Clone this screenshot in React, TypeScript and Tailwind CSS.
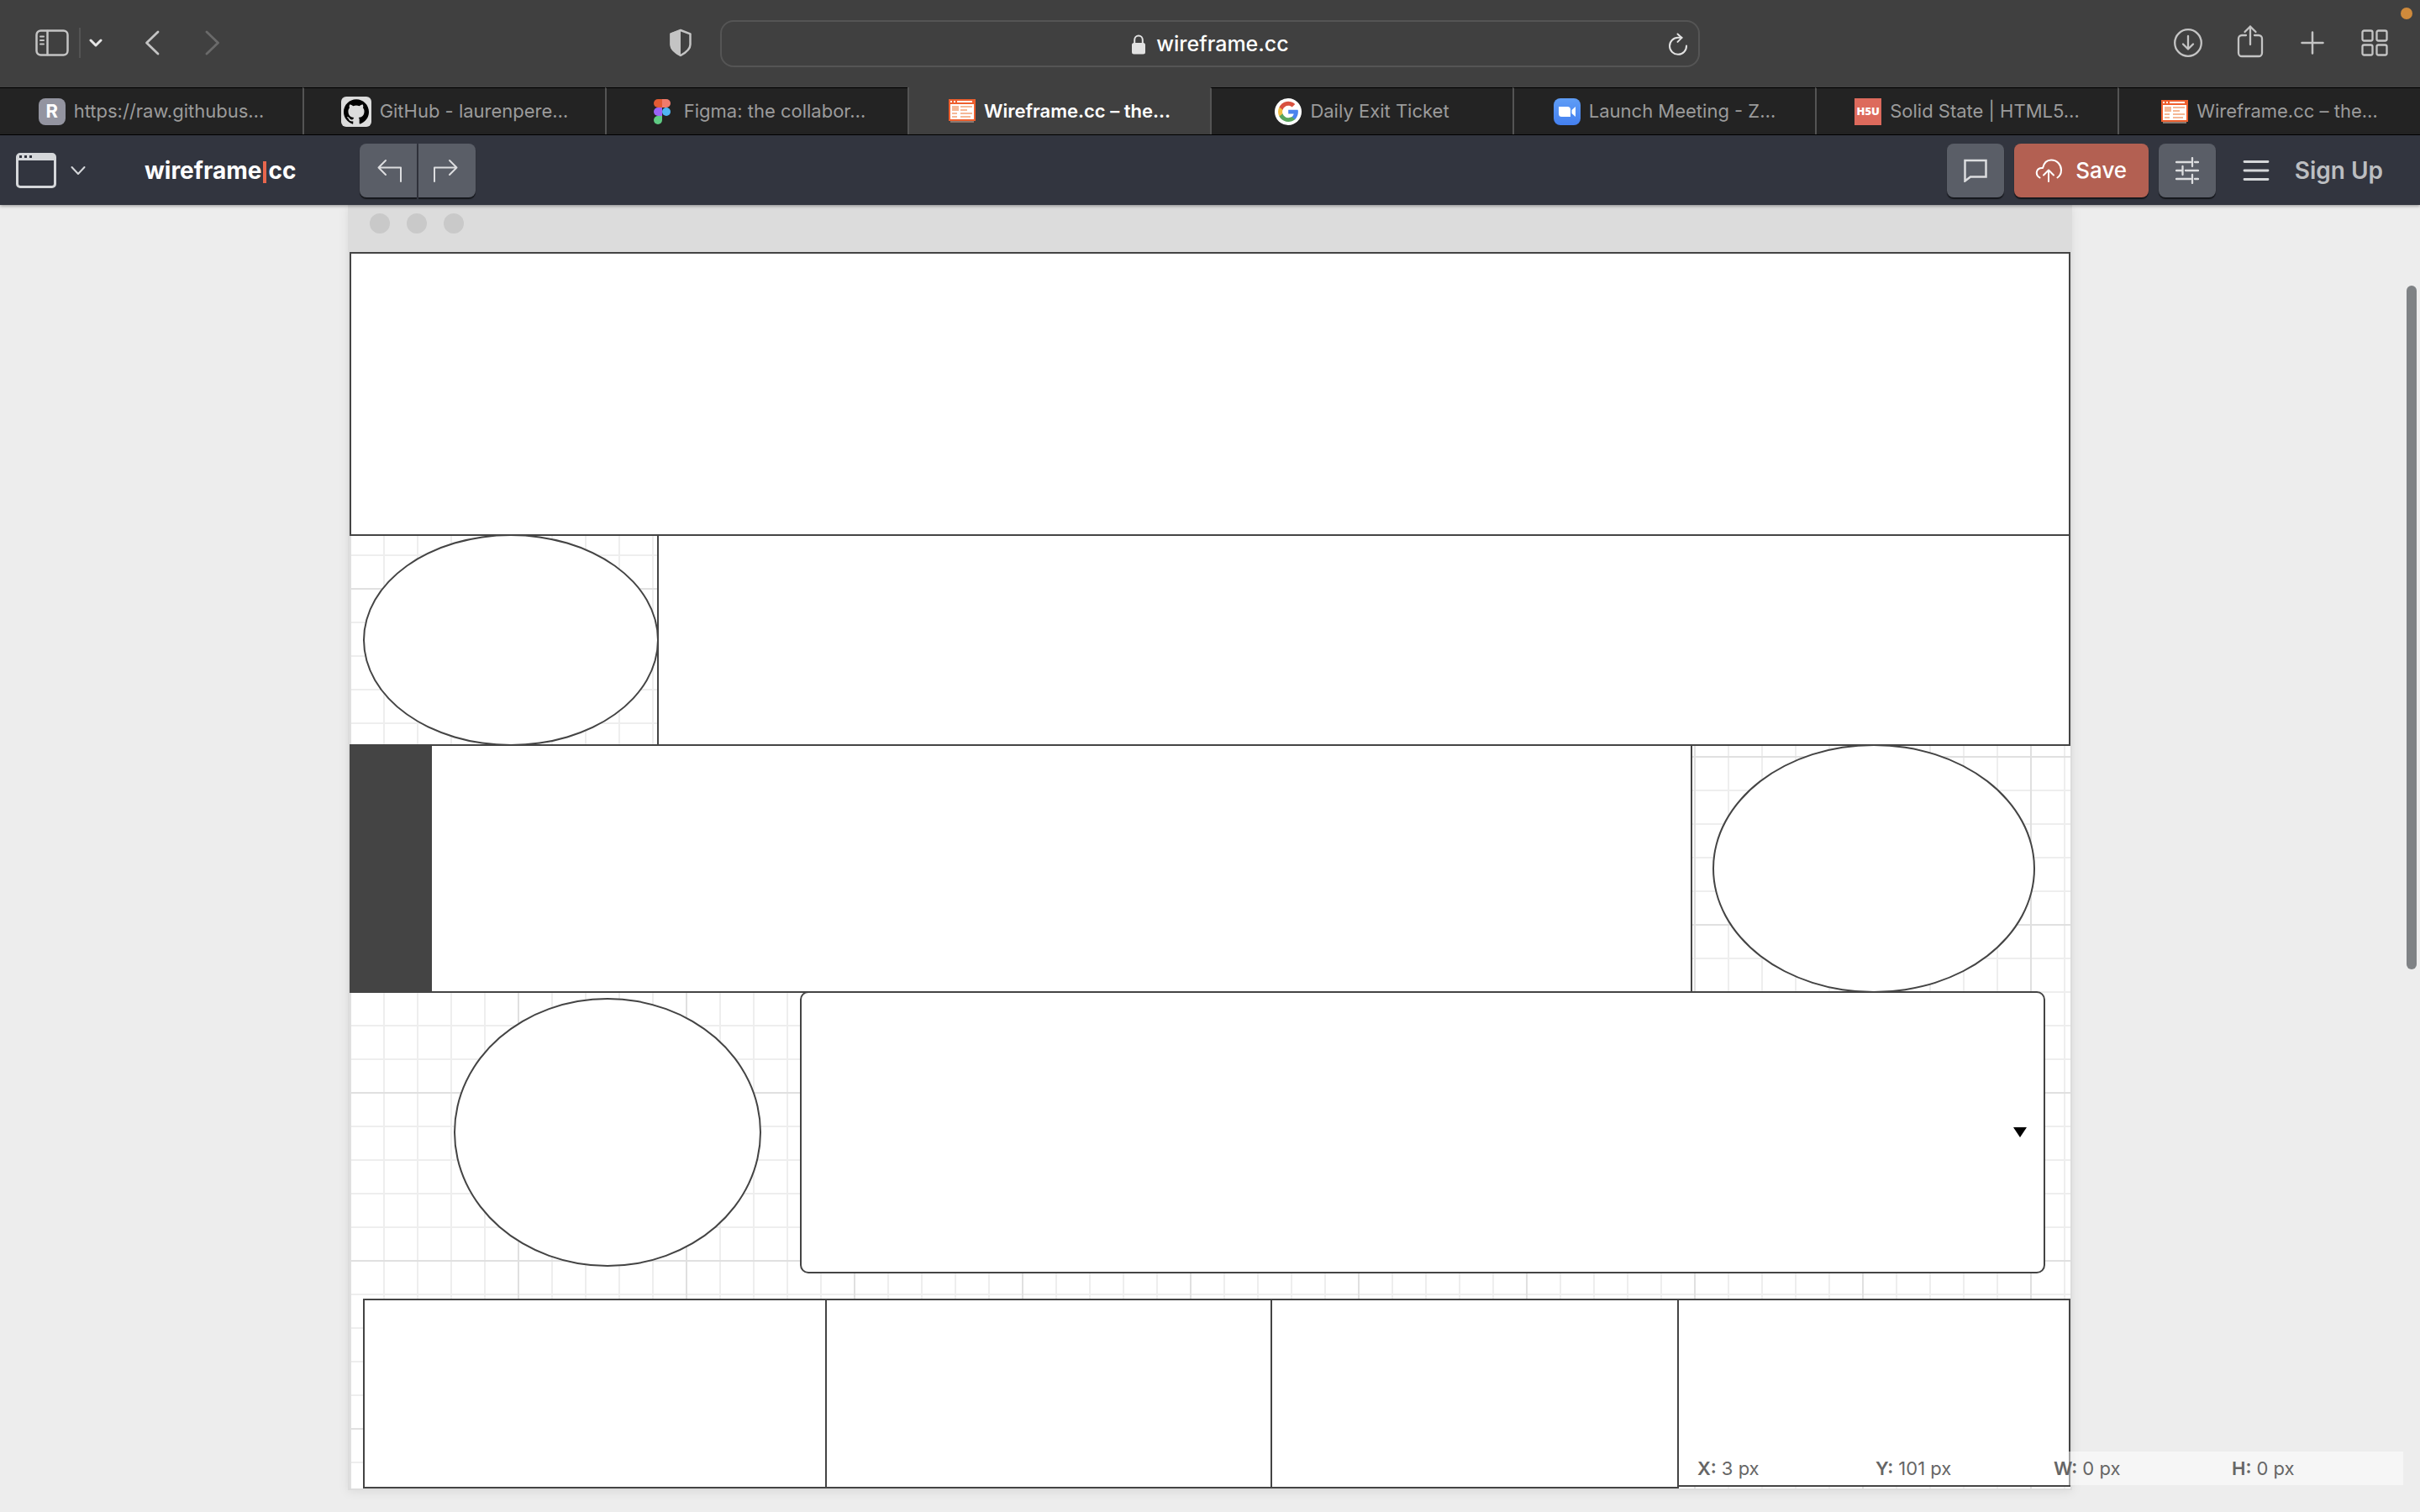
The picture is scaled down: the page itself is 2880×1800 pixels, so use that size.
import type { ReactNode } from "react";
import { SiGithub } from "react-icons/si";

const stroke = {
  fill: "none",
  stroke: "currentColor",
  strokeLinecap: "round",
  strokeLinejoin: "round",
} as const;

function SidebarIcon() {
  return (
    <svg width="40" height="32" viewBox="0 0 40 32" {...stroke} strokeWidth="2.5">
      <rect x="1.5" y="1.5" width="37" height="29" rx="5" />
      <path d="M14.5 2v28" />
      <path d="M6 8.5h4M6 13h4M6 17.5h4" strokeWidth="2" />
    </svg>
  );
}

function ShieldIcon() {
  return (
    <svg width="30" height="34" viewBox="0 0 30 34">
      <path
        d="M15 2 26.5 6.3v12.7c0 5.500-5 9.500-11.500 13-6.500-3.500-11.500-7.500-11.500-13V6.300Z"
        fill="none"
        stroke="currentColor"
        strokeWidth="2.500"
        strokeLinejoin="round"
      />
      <path d="M15 1 2.500 5.800v13.200c0 6 5.500 10.500 12.500 14Z" fill="currentColor" />
    </svg>
  );
}

function LockIcon() {
  return (
    <svg width="18" height="24" viewBox="0 0 18 24">
      <rect x="1" y="10" width="16" height="13.500" rx="2.500" fill="currentColor" />
      <path d="M4.200 11V6.500a4.800 5 0 0 1 9.600 0V11" fill="none" stroke="currentColor" strokeWidth="2" />
    </svg>
  );
}

function ReloadIcon() {
  return (
    <svg width="24" height="28" viewBox="0 0 24 28" {...stroke} strokeWidth="2">
      <path d="M22 15.500A10 10 0 1 1 12 5.800h4.500" />
      <path d="m11.500 1.500 5 4.400-5 5" />
    </svg>
  );
}

function DownloadIcon() {
  return (
    <svg width="36" height="36" viewBox="0 0 36 36" {...stroke} strokeWidth="2.300">
      <circle cx="18" cy="18" r="15.800" />
      <path d="M18 10v15M12 19.500l6 6 6-6" />
    </svg>
  );
}

function ShareIcon() {
  return (
    <svg width="32" height="40" viewBox="0 0 32 40" {...stroke} strokeWidth="2.300">
      <path d="M11 13H6a4 4 0 0 0-4 4v17a4 4 0 0 0 4 4h20a4 4 0 0 0 4-4V17a4 4 0 0 0-4-4h-5" />
      <path d="M16 24V2.500M9.500 9 16 2.500 22.500 9" />
    </svg>
  );
}

function PlusIcon() {
  return (
    <svg width="28" height="28" viewBox="0 0 28 28" {...stroke} strokeWidth="2.500">
      <path d="M14 1.500v25M1.500 14h25" />
    </svg>
  );
}

function GridIcon() {
  return (
    <svg width="32" height="32" viewBox="0 0 32 32" {...stroke} strokeWidth="2.300">
      <rect x="1.500" y="1.500" width="12" height="12" rx="2" />
      <rect x="18.500" y="1.500" width="12" height="12" rx="2" />
      <rect x="1.500" y="18.500" width="12" height="12" rx="2" />
      <rect x="18.500" y="18.500" width="12" height="12" rx="2" />
    </svg>
  );
}

function FigmaIcon() {
  return (
    <svg width="32" height="32" viewBox="0 0 32 32">
      <path d="M16 1h-5a5 5 0 0 0 0 10h5Z" fill="#e25b33" />
      <path d="M16 1h5a5 5 0 0 1 0 10h-5Z" fill="#f07b6c" />
      <path d="M16 11h-5a5 5 0 0 0 0 10h5Z" fill="#9a63f7" />
      <circle cx="21" cy="16" r="5" fill="#4fb6f5" />
      <path d="M16 21h-5a5 5 0 1 0 5 5Z" fill="#5fcb83" />
    </svg>
  );
}

function WireframeIcon() {
  return (
    <svg width="32" height="32" viewBox="0 0 32 32">
      <path d="M2 28h28v2H2Z" fill="#8a7a72" />
      <rect y="2" width="32" height="26" fill="#ee5f2e" />
      <path d="M2 4h2v2H2ZM6 4h2v2H6ZM10 4h18v2H10Z" fill="#fff" />
      <rect x="2" y="8" width="28" height="18" fill="#fff" />
      <path
        d="M4 10h8v6H4ZM14 10h14v2H14ZM14 14h8v2h-8ZM4 18h6v2H4ZM14 18h14v2H14ZM4 22h6v2H4ZM14 22h12v2H14Z"
        fill="#f5b896"
      />
    </svg>
  );
}

function GoogleIcon() {
  return (
    <svg width="32" height="32" viewBox="0 0 32 32">
      <circle cx="16" cy="16" r="16" fill="#fff" />
      <g transform="translate(4 4)">
        <path d="M23.500 9.800H12.200v4.700h6.500c-.3 1.500-1.200 2.800-2.500 3.700v3h4c2.300-2.200 3.700-5.400 3.700-9.100 0-.8-.1-1.600-.4-2.300Z" fill="#4b83ee" />
        <path d="M12.200 24c3.300 0 6-1.100 8-2.900l-4-3c-1.100.7-2.500 1.200-4 1.200-3.100 0-5.800-2.100-6.700-5H1.400v3.100C3.400 21.400 7.500 24 12.200 24Z" fill="#58a55c" />
        <path d="M5.500 14.300a7 7 0 0 1 0-4.600V6.600H1.400a12 12 0 0 0 0 10.800Z" fill="#f1be42" />
        <path d="M12.200 4.700c1.700 0 3.300.6 4.500 1.800l3.600-3.500A12 12 0 0 0 1.400 6.600l4.100 3.100c.9-2.900 3.600-5 6.700-5Z" fill="#d85140" />
      </g>
    </svg>
  );
}

function ZoomIcon() {
  return (
    <svg width="32" height="32" viewBox="0 0 32 32">
      <defs>
        <linearGradient id="zoom-fill" x1="0" y1="0" x2="0" y2="1">
          <stop offset="0" stopColor="#5f9df6" />
          <stop offset="1" stopColor="#4480f0" />
        </linearGradient>
      </defs>
      <rect width="32" height="32" rx="8" fill="url(#zoom-fill)" />
      <path d="M6 10h10.500a3.500 3.500 0 0 1 3.500 3.500V22H9.500A3.500 3.500 0 0 1 6 18.500Z" fill="#fff" />
      <path d="m21.500 14 4.500-4v12l-4.500-4Z" fill="#fff" />
    </svg>
  );
}

function Tab({ icon, title, active = false }: { icon: ReactNode; title: string; active?: boolean }) {
  return (
    <button
      type="button"
      role="tab"
      aria-selected={active}
      className={
        active
          ? "flex min-w-0 items-center justify-center gap-2.5 border-l-2 border-[#545454] bg-[#404040] font-semibold text-white"
          : "flex min-w-0 items-center justify-center gap-2.5 border-t border-l-2 border-t-black border-l-[#545454] bg-[#232323] text-[#9b9b9b] first:border-l-0"
      }
    >
      <span className="shrink-0">{icon}</span>
      <span className="whitespace-nowrap">{title}</span>
    </button>
  );
}

function ToolButton({ label, shape, children }: { label: string; shape: string; children: ReactNode }) {
  return (
    <button
      type="button"
      aria-label={label}
      className={`flex h-16 w-[68px] items-center justify-center bg-[#5a5e67] text-[#dcdddf] shadow-[0_2px_1px_#15171c] ${shape}`}
    >
      {children}
    </button>
  );
}

function Readout({ name, value }: { name: string; value: string }) {
  return (
    <div className="flex w-[212px] gap-1.5 last:w-[204px]">
      <dt className="font-semibold">{name}</dt>
      <dd>{value}</dd>
    </div>
  );
}

function BrowserBar() {
  return (
    <header className="relative grid h-[104px] grid-cols-[1fr_1166px_1fr] items-center bg-[#404040] text-[#c4c4c4]">
      <div className="flex items-center pb-0.5 pl-[42px]">
        <button type="button" aria-label="Show sidebar">
          <SidebarIcon />
        </button>
        <span className="ml-3 h-9 w-0.5 bg-[#545454]" />
        <button type="button" aria-label="Tab groups" className="ml-2.5 text-[#e6e6e6]">
          <svg width="16" height="12" viewBox="0 0 16 12" {...stroke} strokeWidth="3">
            <path d="m2 3 6 6 6-6" />
          </svg>
        </button>
        <button type="button" aria-label="Back" className="ml-[50px]">
          <svg width="18" height="30" viewBox="0 0 18 30" {...stroke} strokeWidth="2.800">
            <path d="M16 2 2.500 15 16 28" />
          </svg>
        </button>
        <button type="button" aria-label="Forward" className="ml-[54px] text-[#6a6a6a]">
          <svg width="18" height="30" viewBox="0 0 18 30" {...stroke} strokeWidth="2.800">
            <path d="M2 2l13.500 13L2 28" />
          </svg>
        </button>
        <button type="button" aria-label="Privacy report" className="mr-8 ml-auto">
          <ShieldIcon />
        </button>
      </div>
      <div className="relative flex h-14 items-center justify-center gap-3 rounded-2xl border-2 border-[#555] pt-0.5 text-[25px] text-white">
        <span className="text-[#e2e2e2]">
          <LockIcon />
        </span>
        <input
          type="text"
          aria-label="Address"
          defaultValue="wireframe.cc"
          className="field-sizing-content bg-transparent font-medium outline-none"
        />
        <button type="button" aria-label="Reload" className="absolute right-3 text-[#e2e2e2]">
          <ReloadIcon />
        </button>
      </div>
      <div className="flex items-center justify-end pr-[38px] pb-0.5">
        <button type="button" aria-label="Downloads">
          <DownloadIcon />
        </button>
        <button type="button" aria-label="Share" className="ml-10 -mt-1">
          <ShareIcon />
        </button>
        <button type="button" aria-label="New tab" className="ml-11">
          <PlusIcon />
        </button>
        <button type="button" aria-label="Tab overview" className="ml-11">
          <GridIcon />
        </button>
      </div>
      <span className="absolute top-[9px] right-[9px] size-[14px] rounded-full bg-[#cf8a3b]" />
    </header>
  );
}

function AppBar() {
  return (
    <nav className="relative z-10 flex h-[83px] items-center bg-[#32353f] pr-[44px] pl-[18px] shadow-[0_1px_4px_rgba(0,0,0,0.4)]">
      <button type="button" aria-label="Device" className="flex items-center gap-4 text-[#d5d7da]">
        <svg width="50" height="42" viewBox="0 0 50 42">
          <path
            fillRule="evenodd"
            fill="currentColor"
            d="M6 0h38a5 5 0 0 1 5 5v32a5 5 0 0 1-5 5H6a5 5 0 0 1-5-5V5a5 5 0 0 1 5-5ZM4 9v28a2 2 0 0 0 2 2h38a2 2 0 0 0 2-2V9ZM5 3v3h3V3ZM11 3v3h3V3ZM17 3v3h3V3Z"
          />
        </svg>
        <svg width="18" height="12" viewBox="0 0 18 12" {...stroke} strokeWidth="2">
          <path d="m1.500 2 7.500 8 7.500-8" />
        </svg>
      </button>
      <a href="#home" className="ml-[70px] flex items-center text-[28px] font-bold text-white">
        wireframe
        <span className="mx-0.5 mt-1 h-[26px] w-1 bg-[#e8664d]" />
        cc
      </a>
      <div className="ml-[76px] flex gap-0.5">
        <ToolButton label="Undo" shape="rounded-l-lg pl-1">
          <svg width="30" height="28" viewBox="0 0 30 28" {...stroke} strokeWidth="2">
            <path d="M28 27V10.500H1.500M10 2 1.500 10.500 10 19" />
          </svg>
        </ToolButton>
        <ToolButton label="Redo" shape="rounded-r-lg pr-1">
          <svg width="30" height="28" viewBox="0 0 30 28" {...stroke} strokeWidth="2">
            <path d="M2 27V10.500h26.500M20 2l8.500 8.500L20 19" />
          </svg>
        </ToolButton>
      </div>
      <div className="ml-auto flex items-center gap-3">
        <ToolButton label="Comments" shape="rounded-lg">
          <svg width="28" height="28" viewBox="0 0 28 28" fill="none" stroke="currentColor" strokeWidth="2.500">
            <path d="M1.500 2h25v19.500H8l-6.500 5Z" />
          </svg>
        </ToolButton>
        <button
          type="button"
          className="flex h-16 w-40 items-center justify-center gap-4 rounded-lg bg-[#b36052] text-[26px] font-medium text-white shadow-[0_2px_1px_#15171c]"
        >
          <svg width="32" height="28" viewBox="0 0 32 28" {...stroke} strokeWidth="2">
            <path d="M5.500 22.500C-.5 19 1 10.500 9 11 10.500 4.500 14.500 1.500 19 1.500c7.500 0 12 6 12 12 0 4-1.500 7-4.500 9" />
            <path d="M16 27V14M10 19.500l6-6 6 6" />
          </svg>
          Save
        </button>
        <ToolButton label="Settings" shape="rounded-lg">
          <svg width="28" height="32" viewBox="0 0 28 32" {...stroke} strokeWidth="2.300">
            <path d="M1 6h17M23 6h4M20 1v10M1 16h7M12 16h15M8.500 11v10M1 26h17M23 26h4M20 21v10" />
          </svg>
        </ToolButton>
        <button type="button" aria-label="Menu" className="mr-[18px] ml-5 text-[#d5d7da]">
          <svg width="32" height="26" viewBox="0 0 32 26" {...stroke} strokeWidth="2.800">
            <path d="M2 2.500h28M2 13h28M2 23.500h28" />
          </svg>
        </button>
        <a href="#signup" className="text-[28px] font-semibold text-[#bcbec1]">
          Sign Up
        </a>
      </div>
    </nav>
  );
}

const box = "border-2 border-[#444] bg-white";

function Canvas() {
  return (
    <main className="mx-auto w-full max-w-[2052px] bg-white shadow-[0_2px_12px_rgba(0,0,0,0.08)]">
      <div className="flex h-14 gap-5 bg-[#dcdcdc] pt-2.5 pl-[26px]">
        <span className="size-6 rounded-full bg-[#c9c9c9]" />
        <span className="size-6 rounded-full bg-[#c9c9c9]" />
        <span className="size-6 rounded-full bg-[#c9c9c9]" />
      </div>
      <div className="border-x-2 border-b-2 border-[#dcdcdc] bg-[linear-gradient(90deg,#e0e0e0_2px,transparent_2px),linear-gradient(#e0e0e0_2px,transparent_2px),linear-gradient(90deg,#eee_2px,transparent_2px),linear-gradient(#eee_2px,transparent_2px)] bg-[size:200px_200px,200px_200px,40px_40px,40px_40px]">
        <div className={`h-[338px] ${box}`} />
        <div className="-mt-0.5 flex h-[252px] pl-4">
          <div className={`w-[352px] rounded-[50%] ${box}`} />
          <div className={`-ml-0.5 flex-1 ${box}`} />
        </div>
        <div className="-mt-0.5 flex h-[296px]">
          <div className={`flex-1 ${box}`}>
            <div className="h-full w-24 bg-[#444]" />
          </div>
          <div className={`mr-[42px] ml-6 w-[384px] rounded-[50%] ${box}`} />
        </div>
        <div className="-mt-0.5 flex pr-[30px] pl-[124px]">
          <div className={`mt-2 h-80 w-[366px] rounded-[50%] ${box}`} />
          <div className="relative ml-[46px] flex flex-1">
            <select aria-label="Dropdown" className={`h-[336px] w-full appearance-none rounded-[10px] ${box}`} />
            <svg
              width="16"
              height="12"
              viewBox="0 0 16 12"
              className="pointer-events-none absolute top-[162px] right-[22px]"
            >
              <path d="M0 0h16L8 12Z" fill="#000" />
            </svg>
          </div>
        </div>
        <div className="mt-[30px] grid h-[226px] grid-cols-[550fr_530fr_484fr_468fr] pl-4">
          <div className={`-mr-0.5 ${box}`} />
          <div className={`-mr-0.5 ${box}`} />
          <div className={`-mr-0.5 ${box}`} />
          <div className={`mb-0.5 ${box}`} />
        </div>
      </div>
    </main>
  );
}

export default function App() {
  return (
    <div className="relative min-h-screen bg-[#ededed] pb-[26px] font-['Inter',sans-serif]">
      <BrowserBar />
      <div role="tablist" className="grid h-[57px] grid-cols-8 border-b border-black bg-[#404040] text-[22px]">
        <Tab
          icon={
            <span className="flex size-8 items-center justify-center rounded-lg bg-[#9394a0] text-[22px] font-bold text-white">
              R
            </span>
          }
          title="https://raw.githubus…"
        />
        <Tab
          icon={
            <span className="flex size-9 items-center justify-center rounded-md bg-[#dcdcdc] text-black">
              <SiGithub size={30} />
            </span>
          }
          title="GitHub - laurenpere…"
        />
        <Tab icon={<FigmaIcon />} title="Figma: the collabor…" />
        <Tab icon={<WireframeIcon />} title="Wireframe.cc – the…" active />
        <Tab icon={<GoogleIcon />} title="Daily Exit Ticket" />
        <Tab icon={<ZoomIcon />} title="Launch Meeting - Z…" />
        <Tab
          icon={
            <span className="flex size-8 items-center justify-center bg-[#dd6a5c] font-['Open_Sans',sans-serif] text-[13px] font-extrabold text-white">
              H5U
            </span>
          }
          title="Solid State | HTML5…"
        />
        <Tab icon={<WireframeIcon />} title="Wireframe.cc – the…" />
      </div>
      <AppBar />
      <Canvas />
      <dl className="absolute right-5 bottom-8 flex h-10 items-center bg-white/50 pl-2 text-[22px] text-[#666]">
        <Readout name="X:" value="3 px" />
        <Readout name="Y:" value="101 px" />
        <Readout name="W:" value="0 px" />
        <Readout name="H:" value="0 px" />
      </dl>
      <span className="absolute top-[340px] right-1 h-[814px] w-3 rounded-full bg-[#7f8285]" />
    </div>
  );
}
